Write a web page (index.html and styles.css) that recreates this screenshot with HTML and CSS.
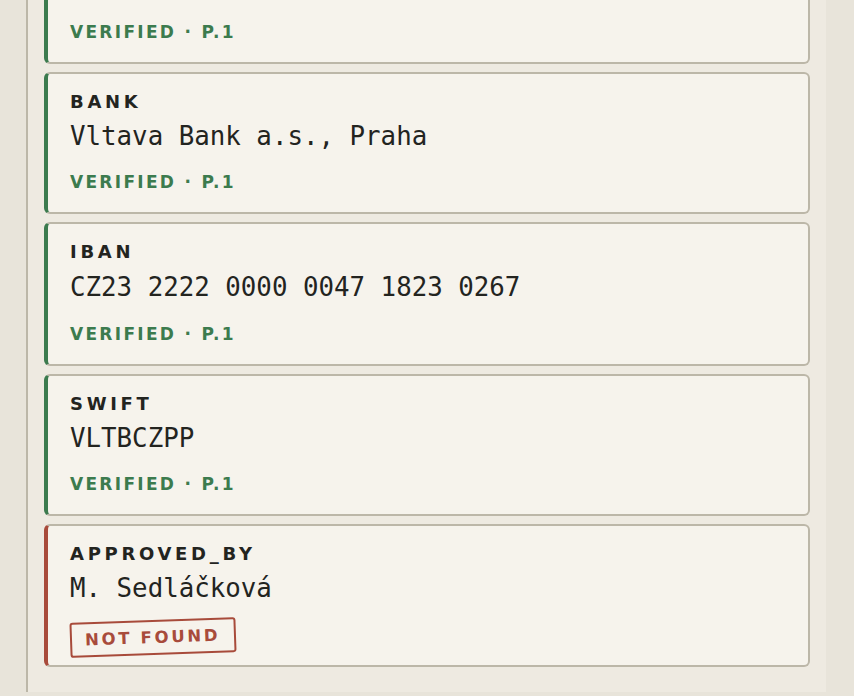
FILE: index.html
```html
<!DOCTYPE html>
<html lang="cs">
<head>
<meta charset="utf-8">
<title>Extracted fields</title>
<link rel="stylesheet" href="styles.css">
</head>
<body>
<div class="frame">
  <div class="panel">
    <div class="list">
      <div class="card card--ok card--tail">
        <div class="status">VERIFIED · P.1</div>
      </div>
      <div class="card card--ok">
        <div class="label">BANK</div>
        <div class="value">Vltava Bank a.s., Praha</div>
        <div class="status">VERIFIED · P.1</div>
      </div>
      <div class="card card--ok">
        <div class="label">IBAN</div>
        <div class="value value--tall">CZ23 2222 0000 0047 1823 0267</div>
        <div class="status">VERIFIED · P.1</div>
      </div>
      <div class="card card--ok">
        <div class="label">SWIFT</div>
        <div class="value">VLTBCZPP</div>
        <div class="status">VERIFIED · P.1</div>
      </div>
      <div class="card card--missing">
        <div class="label">APPROVED_BY</div>
        <div class="value">M. Sedláčková</div>
        <div class="stamp-row"><span class="stamp">NOT FOUND</span></div>
      </div>
    </div>
  </div>
</div>
</body>
</html>
```
FILE: styles.css
```css
html, body {
  margin: 0;
  padding: 0;
}
body {
  background: #e8e4da;
  width: 854px;
  height: 696px;
  overflow: hidden;
  color: #23241f;
}
.frame {
  padding: 0 28px 4px 26px;
}
.panel {
  background: #eeeae1;
  border-left: 2px solid #bcb7a8;
  padding: 0 16px 25px 16px;
  height: 692px;
  box-sizing: border-box;
  overflow: hidden;
}
.list {
  display: flex;
  flex-direction: column;
  gap: 8px;
  margin-top: -12px;
}
.card {
  background: #f6f3ec;
  border: 2px solid #bcb7a8;
  border-radius: 6px;
  padding: 18px 20px 20px 22px;
}
.card--tail {
  padding-top: 32px;
}
.card--tail .status {
  margin-top: 0;
}
.card--ok {
  border-left: 4px solid #3c7b4e;
}
.card--missing {
  border-left: 4px solid #a84b3b;
}
.label {
  font-family: "DejaVu Sans", sans-serif;
  font-weight: bold;
  font-size: 18px;
  line-height: 20px;
  letter-spacing: 3.7px;
  color: #23241f;
}
.value {
  margin-top: 8px;
  font-family: "DejaVu Sans Mono", monospace;
  font-size: 25.8px;
  line-height: 32px;
  color: #23241f;
}
.value--tall {
  line-height: 34px;
}
.status {
  margin-top: 20px;
  font-family: "DejaVu Sans", sans-serif;
  font-weight: bold;
  font-size: 17px;
  line-height: 20px;
  letter-spacing: 2.3px;
  color: #3c7b4e;
}
.stamp-row {
  margin-top: 16px;
  margin-bottom: -10px;
}
.stamp {
  display: inline-block;
  transform: rotate(-2deg);
  border: 2px solid #a84b3b;
  border-radius: 3px;
  padding: 6px 14px 6px 13px;
  font-family: "DejaVu Sans", sans-serif;
  font-weight: bold;
  font-size: 16.5px;
  line-height: 19px;
  letter-spacing: 2.7px;
  color: #a84b3b;
}
```
